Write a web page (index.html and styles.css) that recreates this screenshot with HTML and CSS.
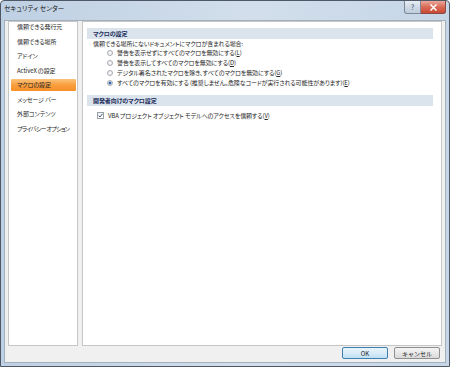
FILE: index.html
```html
<!DOCTYPE html>
<html lang="ja">
<head>
<meta charset="UTF-8">
<title>セキュリティ センター</title>
<link rel="stylesheet" href="styles.css">
</head>
<body>
<div class="window">
  <div class="titlebar">
    <span class="title">セキュリティ センター</span>
    <div class="caption-buttons">
      <div class="cap-btn help">?</div>
      <div class="cap-btn close">
        <svg width="9" height="7" viewBox="0 0 9 7"><path d="M1.5 0.5 L7.5 6.5 M7.5 0.5 L1.5 6.5" stroke="#fff" stroke-width="1.5"/></svg>
      </div>
    </div>
  </div>

  <div class="client">
    <div class="panes">
      <ul class="nav">
        <li>信頼できる発行元</li>
        <li>信頼できる場所</li>
        <li>アドイン</li>
        <li>ActiveX の設定</li>
        <li class="selected">マクロの設定</li>
        <li>メッセージ バー</li>
        <li>外部コンテンツ</li>
        <li class="tight">プライバシー オプション</li>
      </ul>

      <div class="content">
        <div class="section-head">マクロの設定</div>
        <p class="intro">信頼できる場所にないドキュメントにマクロが含まれる場合:</p>
        <div class="options">
          <div class="option"><span class="radio"></span>警告を表示せずにすべてのマクロを無効にする(<u>L</u>)</div>
          <div class="option"><span class="radio"></span>警告を表示してすべてのマクロを無効にする(<u>D</u>)</div>
          <div class="option"><span class="radio"></span>デジタル署名されたマクロを除き、すべてのマクロを無効にする(<u>G</u>)</div>
          <div class="option"><span class="radio checked"></span>すべてのマクロを有効にする (推奨しません。危険なコードが実行される可能性があります)(<u>E</u>)</div>
        </div>

        <div class="section-head second">開発者向けのマクロ設定</div>
        <div class="check-row">
          <span class="checkbox">
            <svg width="5" height="5" viewBox="0 0 5 5"><path d="M0.6 2.6 L2 4 L4.5 0.8" fill="none" stroke="#4a5d80" stroke-width="1"/></svg>
          </span>
          VBA プロジェクト オブジェクト モデルへのアクセスを信頼する(<u>V</u>)
        </div>
      </div>
    </div>

    <div class="footer">
      <button class="btn default">OK</button>
      <button class="btn">キャンセル</button>
    </div>
  </div>
</div>
</body>
</html>
```

FILE: styles.css
```css
body {
  margin: 0;
  padding: 0;
  font-family: "Noto Sans CJK JP", "Liberation Sans", sans-serif;
  font-size: 6px;
  font-feature-settings: "palt" 1;
  letter-spacing: -0.1px;
  color: #262626;
  background: #fff;
}
.window {
  width: 450px;
  height: 367px;
  box-sizing: border-box;
  border: 1px solid #4e5866;
  border-radius: 4px 4px 0 0;
  background: linear-gradient(to right, #bed0e3, #d2deeb 55%, #c6d6e7);
  display: flex;
  flex-direction: column;
}
.titlebar {
  height: 19px;
  display: flex;
  align-items: flex-start;
  justify-content: space-between;
  padding-left: 3px;
}
.title {
  font-size: 6.5px;
  letter-spacing: 0.1px;
  line-height: 14px;
  color: #111;
}
.caption-buttons {
  display: flex;
  margin-right: 3px;
}
.cap-btn {
  height: 12px;
  border: 1px solid #7d8898;
  border-top: none;
  display: flex;
  align-items: center;
  justify-content: center;
}
.help {
  width: 15px;
  border-radius: 0 0 0 3px;
  background: linear-gradient(#e8eef5, #cfd9e5 50%, #bfcddd);
  color: #6a7a90;
  font-size: 7px;
  font-weight: bold;
  letter-spacing: 0;
}
.close {
  width: 24px;
  border-left: none;
  border-color: #8a4a42;
  border-radius: 0 0 3px 0;
  background: linear-gradient(#eba99d, #d86a56 50%, #c94a36);
}
.client {
  flex: 1;
  margin: 0 3px 3px 3px;
  background: #f0f0f0;
  display: flex;
  flex-direction: column;
  padding: 0 3px;
  border: 1px solid #a4afbc;
}
.panes {
  height: 325px;
  display: flex;
  gap: 4px;
}
.nav {
  width: 70px;
  margin: 0;
  padding: 0;
  list-style: none;
  background: #fff;
  border: 1px solid #c6c6c6;
  box-sizing: border-box;
}
.nav li {
  height: 12px;
  line-height: 12px;
  margin: 0 1px 2.57px 2px;
  padding-left: 6px;
  white-space: nowrap;
}
.nav li:first-child {
  margin-top: -1px;
}
.nav li.tight {
  letter-spacing: -0.7px;
}
.nav li.selected {
  background: linear-gradient(#fcc27a, #f89c3a 55%, #f7902a);
  border-radius: 1px;
}
.content {
  flex: 1;
  background: #fff;
  border: 1px solid #c6c6c6;
  padding: 6px 8px 0 4px;
}
.section-head {
  height: 11px;
  line-height: 11px;
  background: #dbe3ec;
  padding-left: 6px;
  font-weight: bold;
  color: #1d2f5c;
}
.section-head.second {
  margin-top: 7px;
}
.intro {
  margin: 1px 0 0 6px;
  line-height: 8px;
}
.options {
  padding-left: 20px;
}
.option {
  height: 10px;
  line-height: 10px;
  display: flex;
  align-items: center;
  white-space: nowrap;
}
.radio {
  width: 4px;
  height: 4px;
  border: 1px solid #a8acb2;
  border-radius: 50%;
  background: radial-gradient(#fff, #e2e4e8);
  margin-right: 4px;
  flex-shrink: 0;
}
.radio.checked {
  background: radial-gradient(#2d5aa6 0, #3a6ab8 45%, #dfe6f0 60%);
}
.check-row {
  margin: 4px 0 0 10px;
  height: 10px;
  display: flex;
  align-items: center;
  white-space: nowrap;
}
.checkbox {
  width: 5px;
  height: 5px;
  border: 1px solid #9aa0a8;
  background: linear-gradient(#eef0f3, #fff);
  margin-right: 4px;
  display: flex;
  align-items: center;
  justify-content: center;
}
.footer {
  flex: 1;
  display: flex;
  justify-content: flex-end;
  align-items: flex-start;
  gap: 6px;
  padding: 1px 2px 0 0;
}
.btn {
  width: 46px;
  height: 12px;
  padding: 0;
  font-family: inherit;
  font-size: 6px;
  color: #222;
  border: 1px solid #8e8f8f;
  border-radius: 2px;
  background: linear-gradient(#f5f5f5, #e8e8e8 50%, #d9d9d9);
}
.btn.default {
  border-color: #3c7fb1;
  background: linear-gradient(#eaf4fb, #d9ecf8 50%, #bfe0f5);
}
```
